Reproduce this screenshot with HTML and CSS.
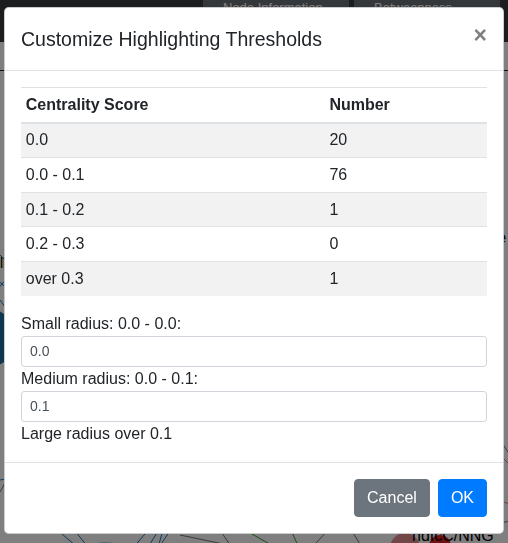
FILE: index.html
```html
<!DOCTYPE html>
<html lang="en">
<head>
<meta charset="utf-8">
<title>Customize Highlighting Thresholds</title>
<link rel="stylesheet" href="styles.css">
</head>
<body>
<div class="page">
  <nav class="navbar">
    <div class="tabs">
      <div class="tab">Node Information</div>
      <div class="tab">Betweenness Centrality</div>
    </div>
  </nav>
  <div class="subbar"></div>
  <div class="canvas">
    <svg class="graph" width="508" height="472" viewBox="0 71 508 472" xmlns="http://www.w3.org/2000/svg">
      <g stroke="#1f77b4" stroke-width="1" fill="none">
        <line x1="-5" y1="250" x2="30" y2="285"/>
        <line x1="-5" y1="292" x2="25" y2="258"/>
        <line x1="0" y1="300" x2="22" y2="330"/>
        <line x1="-8" y1="275" x2="20" y2="300"/>
        <line x1="110" y1="575" x2="55" y2="528"/>
        <line x1="110" y1="575" x2="68" y2="522"/>
        <line x1="110" y1="575" x2="150" y2="528"/>
        <line x1="150" y1="560" x2="172" y2="528"/>
        <line x1="140" y1="560" x2="160" y2="528"/>
        <line x1="155" y1="558" x2="163" y2="530"/>
        <line x1="0" y1="480" x2="12" y2="478"/>
      </g>
      <g stroke="#777" stroke-width="1" fill="none">
        <line x1="0" y1="492" x2="12" y2="470"/>
        <line x1="180" y1="535" x2="300" y2="560"/>
        <line x1="220" y1="530" x2="240" y2="560"/>
        <line x1="330" y1="528" x2="300" y2="560"/>
        <line x1="350" y1="528" x2="370" y2="560"/>
        <line x1="460" y1="528" x2="520" y2="520"/>
        <line x1="500" y1="440" x2="520" y2="470"/>
      </g>
      <g stroke="#2ca02c" stroke-width="1" fill="none">
        <line x1="245" y1="530" x2="280" y2="550"/>
        <line x1="290" y1="528" x2="300" y2="550"/>
      </g>
      <g stroke="#e08080" stroke-width="1" fill="none">
        <line x1="500" y1="455" x2="515" y2="470"/>
        <line x1="495" y1="500" x2="515" y2="505"/>
      </g>
      <circle cx="-14" cy="338" r="30" fill="#1f6e9c"/>
      <circle cx="105" cy="578" r="36" fill="#a9cfe6"/>
      <circle cx="405" cy="548" r="15" fill="#e58e8e"/>
      <circle cx="440" cy="546" r="11" fill="#e02020"/>
      <g font-family="Liberation Sans, Arial, sans-serif" font-size="16" fill="#000">
        <text x="468" y="243">Node</text>
        <text x="470" y="296">EN</text>
        <text x="480" y="352">Dr</text>
        <text x="478" y="377">Ga</text>
        <text x="490" y="398" font-size="12">P</text>
        <text x="478" y="436">ne</text>
        <text x="412" y="541">hdfcC/NNG</text>
        <text x="0" y="268" font-size="14">ll</text>
      </g>
    </svg>
  </div>
</div>
<div class="backdrop"></div>
<div class="modal">
  <div class="modal-content">
    <div class="modal-header">
      <h5 class="modal-title">Customize Highlighting Thresholds</h5>
      <button type="button" class="close">&times;</button>
    </div>
    <div class="modal-body">
      <table class="table">
        <thead>
          <tr><th class="col-score">Centrality Score</th><th>Number</th></tr>
        </thead>
        <tbody>
          <tr><td>0.0</td><td>20</td></tr>
          <tr><td>0.0 - 0.1</td><td>76</td></tr>
          <tr><td>0.1 - 0.2</td><td>1</td></tr>
          <tr><td>0.2 - 0.3</td><td>0</td></tr>
          <tr><td>over 0.3</td><td>1</td></tr>
        </tbody>
      </table>
      <label class="form-label" for="small">Small radius: 0.0 - 0.0:</label>
      <input id="small" class="form-control-sm" type="text" value="0.0">
      <label class="form-label" for="medium">Medium radius: 0.0 - 0.1:</label>
      <input id="medium" class="form-control-sm" type="text" value="0.1">
      <div class="form-label">Large radius over 0.1</div>
    </div>
    <div class="modal-footer">
      <button type="button" class="btn btn-secondary">Cancel</button>
      <button type="button" class="btn btn-primary">OK</button>
    </div>
  </div>
</div>
</body>
</html>
```

FILE: styles.css
```css
html, body {
  margin: 0;
  padding: 0;
}

body {
  font-family: "Liberation Sans", Arial, sans-serif;
  font-size: 16px;
  line-height: 1.5;
  color: #212529;
  overflow: hidden;
  background: #fff;
}

.page {
  height: 543px;
  background: #fff;
  overflow: hidden;
}

.navbar {
  height: 42px;
  background: #363a3e;
  display: flex;
}

.tabs {
  display: flex;
  gap: 5px;
  margin-left: 203px;
}

.tab {
  width: 146px;
  background: #6b7076;
  color: #fff;
  font-size: 13px;
  line-height: 1;
  padding: 1px 0 0 20px;
  box-sizing: border-box;
}

.subbar {
  height: 28px;
  border-bottom: 1px solid #222;
}

.graph {
  display: block;
}

.backdrop {
  position: fixed;
  inset: 0;
  background: rgba(0, 0, 0, 0.5);
}

.modal {
  position: fixed;
  top: 7px;
  left: 4px;
  width: 500px;
}

.modal-content {
  background: #fff;
  border: 1px solid rgba(0, 0, 0, 0.2);
  border-radius: 4.8px;
}

.modal-header {
  display: flex;
  align-items: flex-start;
  justify-content: space-between;
  padding: 16px;
  border-bottom: 1px solid #dee2e6;
}

.modal-title {
  margin: 0;
  font-size: 19.5px;
  font-weight: 500;
  line-height: 30px;
}

.close {
  padding: 16px;
  margin: -16px -16px -16px auto;
  font-family: inherit;
  font-size: 23px;
  font-weight: 700;
  line-height: 1;
  color: #000;
  text-shadow: 0 1px 0 #fff;
  opacity: 0.5;
  background: transparent;
  border: 0;
  cursor: pointer;
}

.modal-body {
  padding: 16px;
}

.table {
  width: 100%;
  border-collapse: collapse;
  margin-bottom: 16px;
  color: #212529;
}

.table th,
.table td {
  padding: 4.8px;
  vertical-align: top;
  border-top: 1px solid #dee2e6;
  text-align: left;
}

.table thead th {
  vertical-align: bottom;
  border-bottom: 2px solid #dee2e6;
  font-weight: 700;
}

.table .col-score {
  width: 294px;
}

.table tbody tr:nth-of-type(odd) {
  background: rgba(0, 0, 0, 0.05);
}

.form-label {
  display: block;
  margin: 0;
}

.form-control-sm {
  display: block;
  width: 100%;
  height: 31px;
  box-sizing: border-box;
  padding: 4px 8px;
  font-family: inherit;
  font-size: 14px;
  line-height: 1.5;
  color: #495057;
  background: #fff;
  border: 1px solid #ced4da;
  border-radius: 3.2px;
}

.modal-footer {
  display: flex;
  align-items: center;
  justify-content: flex-end;
  padding: 12px;
  border-top: 1px solid #dee2e6;
}

.modal-footer > * {
  margin: 4px;
}

.btn {
  font-family: inherit;
  font-size: 16px;
  line-height: 1.5;
  padding: 6px 12px;
  border: 1px solid transparent;
  border-radius: 4px;
  color: #fff;
  cursor: pointer;
}

.btn-secondary {
  background: #6c757d;
  border-color: #6c757d;
}

.btn-primary {
  background: #007bff;
  border-color: #007bff;
}
```
